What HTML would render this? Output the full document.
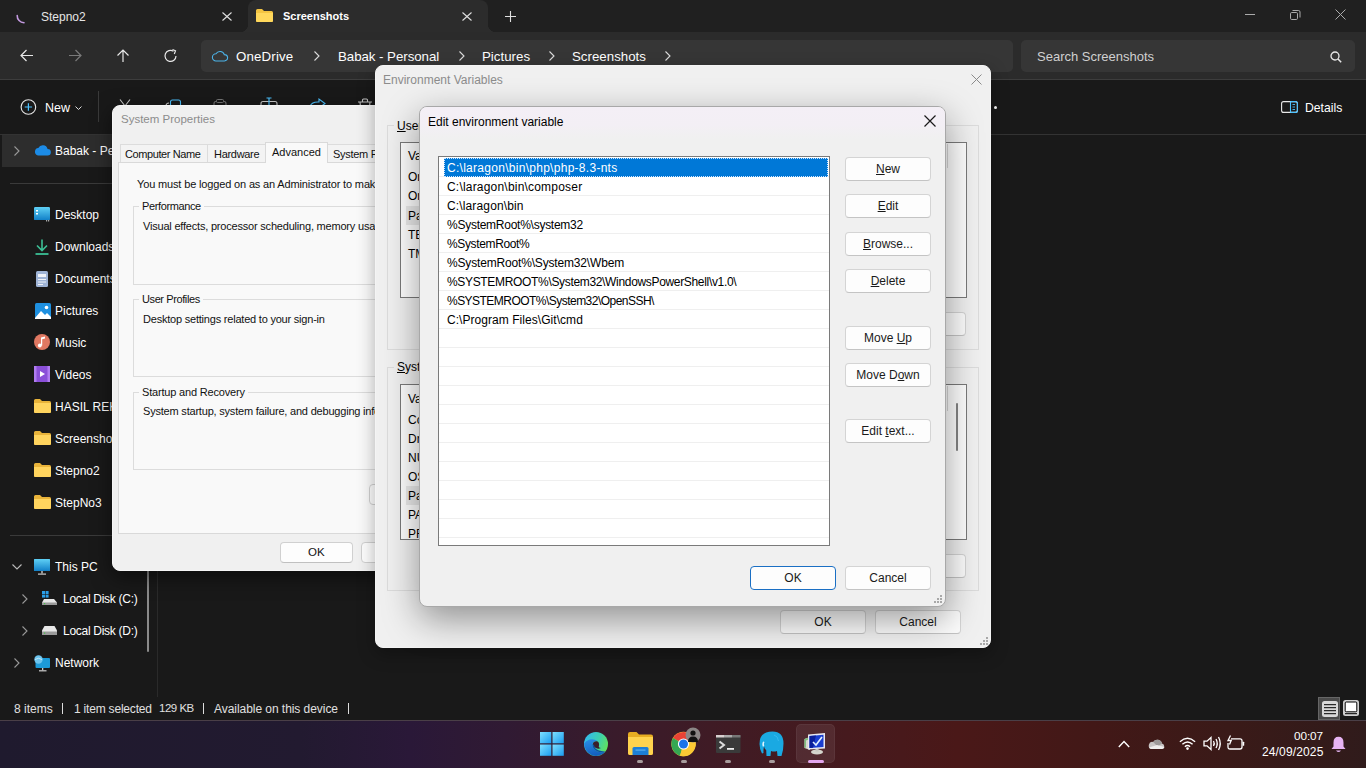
<!DOCTYPE html>
<html><head><meta charset="utf-8">
<style>
*{margin:0;padding:0;box-sizing:border-box}
html,body{width:1366px;height:768px;overflow:hidden;background:#191919;font-family:"Liberation Sans",sans-serif;position:relative}
.a{position:absolute}
.t{position:absolute;white-space:nowrap;line-height:1}
svg{position:absolute;overflow:visible}
.ex{color:#fff;font-size:13.3px}
.nv{color:#fff;font-size:12px}
.d12{font-size:12px;color:#000}
.btn{position:absolute;background:#fdfdfd;border:1px solid #d4d4d4;border-bottom-color:#c4c4c4;border-radius:4px;font-size:12px;color:#1a1a1a;text-align:center;line-height:22px;height:24px;width:86px}
.u{text-decoration:underline;text-underline-offset:1px}
.row{position:absolute;left:0;width:390px;height:19px;border-bottom:1px solid #efefef}
.rt{position:absolute;left:8px;top:4px;font-size:12px;line-height:1;white-space:nowrap;color:#000}
</style></head><body>

<!-- ============ EXPLORER ============ -->
<div class="a" style="left:0;top:0;width:1366px;height:32px;background:#202020"></div>
<div class="a" style="left:248px;top:0;width:240px;height:32px;background:#2c2c2c;border-radius:8px 8px 0 0"></div>
<div class="a" style="left:240px;top:24px;width:8px;height:8px;background:radial-gradient(circle at 0 0,#202020 8px,#2c2c2c 8.5px)"></div>
<div class="a" style="left:488px;top:24px;width:8px;height:8px;background:radial-gradient(circle at 100% 0,#202020 8px,#2c2c2c 8.5px)"></div>
<svg style="left:0;top:0" width="40" height="32"><path d="M17.2 15.5 A7 7 0 0 0 24 22.8" stroke="#c39ae0" stroke-width="1.6" fill="none" stroke-linecap="round"/></svg>
<div class="t" style="left:41px;top:11px;font-size:12px;color:#e6e6e6">Stepno2</div>
<svg style="left:222px;top:12px" width="10" height="9"><path d="M0.5 0.5L9.5 8.5M9.5 0.5L0.5 8.5" stroke="#e0e0e0" stroke-width="1.1"/></svg>
<svg style="left:256px;top:9px" width="17" height="13"><path d="M0 1.5Q0 0 1.5 0H6L8 2H15.5Q17 2 17 3.5V11.5Q17 13 15.5 13H1.5Q0 13 0 11.5Z" fill="#f4c542"/><path d="M0 4H17V11.5Q17 13 15.5 13H1.5Q0 13 0 11.5Z" fill="#ffd85c"/></svg>
<div class="t" style="left:283px;top:11px;font-size:11px;font-weight:bold;color:#fff">Screenshots</div>
<svg style="left:462px;top:12px" width="10" height="9"><path d="M0.5 0.5L9.5 8.5M9.5 0.5L0.5 8.5" stroke="#e0e0e0" stroke-width="1.1"/></svg>
<svg style="left:505px;top:11px" width="11" height="11"><path d="M5.5 0V11M0 5.5H11" stroke="#e0e0e0" stroke-width="1.1"/></svg>
<!-- window controls -->
<svg style="left:1245px;top:14px" width="11" height="2"><path d="M0 0.5H10" stroke="#aaa" stroke-width="1"/></svg>
<svg style="left:1290px;top:10px" width="11" height="10"><rect x="0.5" y="2.5" width="7" height="7" rx="1.2" fill="none" stroke="#aaa"/><path d="M2.5 0.5H8.5Q10 0.5 10 2V7.5" fill="none" stroke="#aaa"/></svg>
<svg style="left:1335px;top:9px" width="11" height="11"><path d="M0.5 0.5L10.5 10.5M10.5 0.5L0.5 10.5" stroke="#aaa" stroke-width="1"/></svg>

<!-- address row -->
<div class="a" style="left:0;top:32px;width:1366px;height:48px;background:#2b2b2b;border-bottom:1px solid #3d3d3d"></div>
<svg style="left:20px;top:49px" width="14" height="13"><path d="M13 6.5H1M6.5 1L1 6.5L6.5 12" stroke="#e8e8e8" stroke-width="1.2" fill="none"/></svg>
<svg style="left:68px;top:49px" width="14" height="13"><path d="M1 6.5H13M7.5 1L13 6.5L7.5 12" stroke="#7a7a7a" stroke-width="1.2" fill="none"/></svg>
<svg style="left:116px;top:49px" width="14" height="14"><path d="M7 13V1M1.5 6.5L7 1L12.5 6.5" stroke="#e8e8e8" stroke-width="1.2" fill="none"/></svg>
<svg style="left:164px;top:49px" width="14" height="14"><path d="M12 7A5.5 5.5 0 1 1 9.5 2.3" stroke="#e8e8e8" stroke-width="1.2" fill="none"/><path d="M8.5 0.5L11.5 1.8L10.3 5" stroke="#e8e8e8" stroke-width="1.2" fill="none"/></svg>
<div class="a" style="left:201px;top:40px;width:812px;height:32px;background:#363636;border-radius:5px"></div>
<svg style="left:212px;top:50px" width="16" height="12"><path d="M4 11H12.5A3.2 3.2 0 0 0 12.3 4.6A4.6 4.6 0 0 0 4 3.8A3.6 3.6 0 0 0 4 11Z" stroke="#4cb3e8" stroke-width="1.1" fill="none"/></svg>
<div class="t ex" style="left:236px;top:50px;letter-spacing:0.15px">OneDrive</div>
<svg style="left:314px;top:51px" width="6" height="10"><path d="M0.5 0.5L5 5L0.5 9.5" stroke="#ddd" stroke-width="1.1" fill="none"/></svg>
<div class="t ex" style="left:338px;top:50px;letter-spacing:-0.05px">Babak - Personal</div>
<svg style="left:459px;top:51px" width="6" height="10"><path d="M0.5 0.5L5 5L0.5 9.5" stroke="#ddd" stroke-width="1.1" fill="none"/></svg>
<div class="t ex" style="left:482px;top:50px;letter-spacing:0px">Pictures</div>
<svg style="left:549px;top:51px" width="6" height="10"><path d="M0.5 0.5L5 5L0.5 9.5" stroke="#ddd" stroke-width="1.1" fill="none"/></svg>
<div class="t ex" style="left:572px;top:50px">Screenshots</div>
<svg style="left:665px;top:51px" width="6" height="10"><path d="M0.5 0.5L5 5L0.5 9.5" stroke="#ddd" stroke-width="1.1" fill="none"/></svg>
<div class="a" style="left:1021px;top:40px;width:334px;height:32px;background:#363636;border-radius:5px"></div>
<div class="t" style="left:1037px;top:50px;font-size:13px;color:#d0d0d0">Search Screenshots</div>
<svg style="left:1330px;top:51px" width="12" height="12"><circle cx="5" cy="5" r="4" stroke="#e8e8e8" stroke-width="1.3" fill="none"/><path d="M8 8L11.2 11.2" stroke="#e8e8e8" stroke-width="1.5"/></svg>

<!-- command bar -->
<div class="a" style="left:0;top:134px;width:1366px;height:1px;background:#333"></div>
<svg style="left:20px;top:99px" width="17" height="17"><circle cx="8.4" cy="8" r="7.3" stroke="#e8e8e8" stroke-width="1.1" fill="none"/><path d="M8.4 4.3V11.7M4.7 8H12.1" stroke="#4cc2ff" stroke-width="1.2"/></svg>
<div class="t" style="left:45px;top:102px;font-size:12.5px;color:#fff">New</div>
<svg style="left:75px;top:106px" width="7" height="4"><path d="M0.5 0.5L3.5 3.5L6.5 0.5" stroke="#ddd" stroke-width="1" fill="none"/></svg>
<div class="a" style="left:98px;top:91px;width:1px;height:31px;background:#3a3a3a"></div>
<svg style="left:119px;top:99px" width="12" height="8"><path d="M1 0.5L6 7M11 0.5L6 7" stroke="#ccc" stroke-width="1.1" fill="none"/></svg>
<svg style="left:165px;top:99px" width="17" height="8"><rect x="5.5" y="1" width="10" height="12" rx="2" stroke="#4cc2ff" stroke-width="1.1" fill="none"/><path d="M1 7Q1 4 4 4" stroke="#ccc" stroke-width="1.1" fill="none"/></svg>
<svg style="left:213px;top:99px" width="14" height="8"><rect x="1" y="2.5" width="12" height="12" rx="2" stroke="#777" stroke-width="1.1" fill="none"/><rect x="3.5" y="0.5" width="7" height="3" rx="1" stroke="#777" stroke-width="1" fill="#191919"/></svg>
<svg style="left:260px;top:97px" width="18" height="10"><rect x="1" y="4.5" width="16" height="10" rx="2" stroke="#ccc" stroke-width="1.1" fill="none"/><path d="M6.5 1H11.5M9 1V10" stroke="#4cc2ff" stroke-width="1.2" fill="none"/></svg>
<svg style="left:309px;top:98px" width="17" height="9"><path d="M1 9Q2 4 9 4H10V1L16 5.5L10 10" stroke="#4cc2ff" stroke-width="1.1" fill="none"/><path d="M1 9V12" stroke="#ccc" stroke-width="1.1"/></svg>
<svg style="left:357px;top:98px" width="16" height="9"><path d="M1 4H15M5.5 4V2Q5.5 1 6.5 1H9.5Q10.5 1 10.5 2V4M3 4L4 14M13 4L12 14" stroke="#ccc" stroke-width="1.1" fill="none"/></svg>
<div class="a" style="left:994px;top:106px;width:3px;height:3px;border-radius:50%;background:#fff"></div>
<svg style="left:1281px;top:101px" width="17" height="12"><rect x="0.6" y="0.6" width="15.8" height="10.8" rx="2" stroke="#e8e8e8" stroke-width="1.1" fill="none"/><path d="M9.5 0.6V11.4" stroke="#4cc2ff" stroke-width="1.1"/><path d="M9.5 0.6H14.4Q16.4 0.6 16.4 2.6V9.4Q16.4 11.4 14.4 11.4H9.5" stroke="#4cc2ff" stroke-width="1.1" fill="none"/><path d="M11.5 3.5H14M11.5 6H14M11.5 8.5H14" stroke="#4cc2ff" stroke-width="0.9"/></svg>
<div class="t" style="left:1305px;top:102px;font-size:12.2px;color:#fff">Details</div>

<!-- nav pane -->
<div class="a" style="left:0;top:135px;width:158px;height:562px;background:#191919"></div>
<div class="a" style="left:2px;top:135px;width:156px;height:32px;background:#2d2d2d"></div>
<svg style="left:14px;top:146px" width="6" height="10"><path d="M0.5 0.5L5 5L0.5 9.5" stroke="#999" stroke-width="1.1" fill="none"/></svg>
<svg style="left:34px;top:144px" width="17" height="12"><path d="M4 11.5H13.5A3.3 3.3 0 0 0 13.6 4.9A5 5 0 0 0 4.3 4A3.8 3.8 0 0 0 4 11.5Z" fill="#1c8be6"/></svg>
<div class="t nv" style="left:55px;top:145px">Babak - Personal</div>
<div class="a" style="left:10px;top:183px;width:148px;height:1px;background:#3a3a3a"></div>

<svg style="left:34px;top:207px" width="17" height="16"><rect x="0" y="0" width="16" height="13" rx="1.5" fill="#36a9e1"/><rect x="0" y="0" width="16" height="13" rx="1.5" fill="url(#gdesk)"/><rect x="2" y="3" width="2" height="1.5" fill="#fff"/><rect x="2" y="6" width="2" height="1.5" fill="#fff"/><rect x="12" y="13" width="1.2" height="1.5" fill="#aaa"/><rect x="14" y="13" width="1.2" height="1.5" fill="#aaa"/>
<defs><linearGradient id="gdesk" x1="0" y1="0" x2="0" y2="1"><stop offset="0" stop-color="#5fd0f5"/><stop offset="1" stop-color="#1180c8"/></linearGradient></defs></svg>
<div class="t nv" style="left:55px;top:209px">Desktop</div>
<svg style="left:35px;top:239px" width="14" height="17"><path d="M7 0.5V11M2 6.5L7 11.5L12 6.5" stroke="#3cbf95" stroke-width="1.6" fill="none"/><path d="M0.5 15H13.5" stroke="#3cbf95" stroke-width="1.8"/></svg>
<div class="t nv" style="left:55px;top:241px">Downloads</div>
<svg style="left:36px;top:271px" width="12" height="16"><rect x="0" y="0" width="12" height="16" rx="1.5" fill="#9fb4d6"/><rect x="2" y="3" width="8" height="3" fill="#eef2f8"/><rect x="2" y="8" width="8" height="1" fill="#eef2f8"/><rect x="2" y="10.5" width="8" height="1" fill="#eef2f8"/><rect x="2" y="13" width="5" height="1" fill="#eef2f8"/></svg>
<div class="t nv" style="left:55px;top:273px">Documents</div>
<svg style="left:35px;top:303px" width="16" height="16"><rect x="0" y="0" width="16" height="16" rx="1.5" fill="#1e90e0"/><path d="M0 15L6 8L10 12L12 10L16 14V16H0Z" fill="#fff"/><circle cx="11.5" cy="4.5" r="1.8" fill="#fff"/></svg>
<div class="t nv" style="left:55px;top:305px">Pictures</div>
<svg style="left:34px;top:334px" width="16" height="16"><circle cx="8" cy="8" r="8" fill="#e07862"/><path d="M7 11.5V3.5L11 2.5V4.5L8.2 5.3V11.5" fill="#fff"/><circle cx="5.8" cy="11.5" r="1.9" fill="#fff"/></svg>
<div class="t nv" style="left:55px;top:337px">Music</div>
<svg style="left:34px;top:366px" width="16" height="16"><rect x="0" y="0" width="16" height="16" rx="1.5" fill="#8a4fd8"/><rect x="0" y="0" width="2.5" height="16" fill="#b07cf0"/><rect x="13.5" y="0" width="2.5" height="16" fill="#b07cf0"/><path d="M6 5L11 8L6 11Z" fill="#fff"/></svg>
<div class="t nv" style="left:55px;top:369px">Videos</div>
<svg style="left:34px;top:399px" width="17" height="14"><path d="M0 1.5Q0 0 1.5 0H6L8 2H15.5Q17 2 17 3.5V12.5Q17 14 15.5 14H1.5Q0 14 0 12.5Z" fill="#e8b33a"/><path d="M0 4H17V12.5Q17 14 15.5 14H1.5Q0 14 0 12.5Z" fill="#ffd45e"/></svg>
<div class="t nv" style="left:55px;top:401px">HASIL REKAP</div>
<svg style="left:34px;top:431px" width="17" height="14"><path d="M0 1.5Q0 0 1.5 0H6L8 2H15.5Q17 2 17 3.5V12.5Q17 14 15.5 14H1.5Q0 14 0 12.5Z" fill="#e8b33a"/><path d="M0 4H17V12.5Q17 14 15.5 14H1.5Q0 14 0 12.5Z" fill="#ffd45e"/></svg>
<div class="t nv" style="left:55px;top:433px">Screenshots</div>
<svg style="left:34px;top:463px" width="17" height="14"><path d="M0 1.5Q0 0 1.5 0H6L8 2H15.5Q17 2 17 3.5V12.5Q17 14 15.5 14H1.5Q0 14 0 12.5Z" fill="#e8b33a"/><path d="M0 4H17V12.5Q17 14 15.5 14H1.5Q0 14 0 12.5Z" fill="#ffd45e"/></svg>
<div class="t nv" style="left:55px;top:465px">Stepno2</div>
<svg style="left:34px;top:495px" width="17" height="14"><path d="M0 1.5Q0 0 1.5 0H6L8 2H15.5Q17 2 17 3.5V12.5Q17 14 15.5 14H1.5Q0 14 0 12.5Z" fill="#e8b33a"/><path d="M0 4H17V12.5Q17 14 15.5 14H1.5Q0 14 0 12.5Z" fill="#ffd45e"/></svg>
<div class="t nv" style="left:55px;top:497px">StepNo3</div>
<div class="a" style="left:10px;top:535px;width:148px;height:1px;background:#3a3a3a"></div>
<svg style="left:12px;top:564px" width="10" height="6"><path d="M0.5 0.5L5 5L9.5 0.5" stroke="#bbb" stroke-width="1.1" fill="none"/></svg>
<svg style="left:34px;top:559px" width="16" height="16"><rect x="0" y="0" width="16" height="12" rx="1" fill="#2aa8e0"/><rect x="0" y="0" width="16" height="12" rx="1" fill="url(#gdesk)"/><rect x="7.3" y="12" width="1.4" height="2.5" fill="#ccc"/><rect x="4" y="14.5" width="8" height="1.2" fill="#ccc"/></svg>
<div class="t nv" style="left:55px;top:561px">This PC</div>
<svg style="left:22px;top:594px" width="6" height="10"><path d="M0.5 0.5L5 5L0.5 9.5" stroke="#999" stroke-width="1.1" fill="none"/></svg>
<svg style="left:42px;top:591px" width="15" height="15"><rect x="0" y="0" width="3" height="3" fill="#2a9ee8"/><rect x="3.6" y="0" width="3" height="3" fill="#2a9ee8"/><rect x="0" y="3.6" width="3" height="3" fill="#2a9ee8"/><rect x="3.6" y="3.6" width="3" height="3" fill="#2a9ee8"/><path d="M2 8H12L15 11.5V14H0V11.5Z" fill="#e8e8e8"/><rect x="0" y="11.5" width="15" height="2.5" fill="#9a9a9a"/><rect x="2" y="12.2" width="1.2" height="1" fill="#3c3"/></svg>
<div class="t nv" style="left:63px;top:593px;letter-spacing:-0.28px">Local Disk (C:)</div>
<svg style="left:22px;top:626px" width="6" height="10"><path d="M0.5 0.5L5 5L0.5 9.5" stroke="#999" stroke-width="1.1" fill="none"/></svg>
<svg style="left:42px;top:626px" width="15" height="10"><path d="M2.5 0H12.5L15 4.5V9H0V4.5Z" fill="#e8e8e8"/><rect x="0" y="5.5" width="15" height="3.5" fill="#9a9a9a"/><rect x="2" y="6.6" width="1.2" height="1" fill="#3c3"/></svg>
<div class="t nv" style="left:63px;top:625px;letter-spacing:-0.28px">Local Disk (D:)</div>
<svg style="left:14px;top:658px" width="6" height="10"><path d="M0.5 0.5L5 5L0.5 9.5" stroke="#999" stroke-width="1.1" fill="none"/></svg>
<svg style="left:34px;top:655px" width="16" height="17"><rect x="1.5" y="3" width="14.5" height="10" rx="1" fill="#1c9ad8"/><circle cx="4.5" cy="4.5" r="4.2" fill="#6cc4ee"/><path d="M1 4.5Q4.5 2 8 4.5" stroke="#fff" stroke-width="0.6" fill="none"/><rect x="8" y="13" width="1.3" height="2.2" fill="#ccc"/><rect x="5" y="15.2" width="7.5" height="1.2" fill="#ccc"/></svg>
<div class="t nv" style="left:55px;top:657px">Network</div>
<div class="a" style="left:147px;top:570px;width:2px;height:82px;background:#8a8a8a;border-radius:1px"></div>
<div class="a" style="left:157px;top:135px;width:1px;height:562px;background:#2a2a2a"></div>

<!-- status bar -->
<div class="t" style="left:14px;top:703px;font-size:12px;color:#e0e0e0">8 items</div>
<div class="a" style="left:62px;top:703px;width:1px;height:11px;background:#ddd"></div>
<div class="t" style="left:74px;top:703px;font-size:12px;color:#e0e0e0;letter-spacing:-0.2px">1 item selected</div>
<div class="t" style="left:159px;top:703px;font-size:11.5px;color:#e0e0e0;letter-spacing:-0.5px">129 KB</div>
<div class="a" style="left:203px;top:703px;width:1px;height:11px;background:#ddd"></div>
<div class="t" style="left:214px;top:703px;font-size:12px;color:#e0e0e0;letter-spacing:-0.05px">Available on this device</div>
<div class="a" style="left:348px;top:703px;width:1px;height:11px;background:#ddd"></div>
<div class="a" style="left:1318px;top:697px;width:22px;height:23px;background:#4a4a4a;border:1px solid #666"></div>
<svg style="left:1322px;top:701px" width="16" height="16"><rect x="0" y="0" width="16" height="16" rx="2.5" fill="#d8d8d8"/><path d="M2 3.7H14M2 6.7H14M2 9.7H14M2 12.7H14" stroke="#000" stroke-width="1"/></svg>
<svg style="left:1343px;top:700px" width="16" height="16"><rect x="0" y="0" width="16" height="16" rx="2.5" fill="#d0d0d0"/><rect x="2.2" y="2" width="11.6" height="9.8" rx="1" fill="#fff" stroke="#000" stroke-width="1"/><path d="M2 13.7H14" stroke="#000" stroke-width="1"/></svg>

<!-- ============ TASKBAR ============ -->
<div id="taskbar" class="a" style="left:0;top:720px;width:1366px;height:48px;background:linear-gradient(90deg,#1f1a2e 0%,#221a30 22%,#2a1838 30%,#301a33 37%,#391b2b 45%,#3f1b25 52%,#461a1e 62%,#4a1818 70%,#421817 80%,#3a1a18 90%,#301b1b 100%)"></div>
<div class="a" style="left:0;top:720px;width:1366px;height:1px;background:#4a3f47"></div>

<svg style="left:540px;top:732px" width="24" height="24"><defs><linearGradient id="gw" x1="0" y1="0" x2="1" y2="1"><stop offset="0" stop-color="#7ee0ff"/><stop offset="1" stop-color="#1a9cf0"/></linearGradient></defs><rect x="0" y="0" width="11.3" height="11.3" fill="url(#gw)"/><rect x="12.5" y="0" width="11.3" height="11.3" fill="url(#gw)"/><rect x="0" y="12.5" width="11.3" height="11.3" fill="url(#gw)"/><rect x="12.5" y="12.5" width="11.3" height="11.3" fill="url(#gw)"/></svg>
<svg style="left:584px;top:732px" width="24" height="24"><defs><linearGradient id="ge1" x1="0" y1="0.2" x2="1" y2="0.6"><stop offset="0" stop-color="#33b8f2"/><stop offset="0.55" stop-color="#3ccfb0"/><stop offset="1" stop-color="#62e35c"/></linearGradient><linearGradient id="ge2" x1="0" y1="0" x2="0.3" y2="1"><stop offset="0" stop-color="#2a90e8"/><stop offset="1" stop-color="#1460c0"/></linearGradient></defs><circle cx="12" cy="12" r="12" fill="url(#ge1)"/><path d="M0.2 11.5A12 12 0 0 0 21.5 19.5Q17 21 13.5 19.5Q8 17 8.5 12Q9.5 8.5 13.5 9Q10 6.5 5.5 7.5Q1.5 8.8 0.2 11.5Z" fill="url(#ge2)"/><path d="M8.8 12Q9.5 8.8 13 9.2Q15.5 10 15 13.5Q14 15.5 17 16Q13.5 17.5 11 15.5Q8.5 14 8.8 12Z" fill="#3a1e2a"/><path d="M21.5 19.5Q17 21 13.5 19.5Q8 17 8.5 12L10 13Q10.5 17 15 18.5Q19 19.5 21.5 19.5Z" fill="#0e4ea0"/></svg>
<svg style="left:628px;top:732px" width="25" height="23"><path d="M0 2Q0 0 2 0H8.5L11 2.5H23Q25 2.5 25 4.5V21Q25 23 23 23H2Q0 23 0 21Z" fill="#e8ad22"/><path d="M0 5H25V21Q25 23 23 23H2Q0 23 0 21Z" fill="#ffd34e"/><path d="M4.5 16.5Q4.5 15 6 15H19Q20.5 15 20.5 16.5V23H4.5Z" fill="#1d7fd6"/><rect x="7.5" y="17.5" width="10" height="1.2" fill="#5ab0f0"/></svg>
<div class="a" style="left:637px;top:760px;width:6px;height:3px;border-radius:2px;background:#a89d9d"></div>
<svg style="left:671px;top:731px" width="26" height="26"><circle cx="12.5" cy="13" r="12.2" fill="#fdd23a"/><path d="M12.5 13L2 7A12.2 12.2 0 0 1 23 7Z" fill="#e94235"/><path d="M12.5 13L2 7A12.2 12.2 0 0 0 9 24.7Z" fill="#34a853"/><path d="M12.5 13L23 7A12.2 12.2 0 0 1 9 24.7Z" fill="#fcc934"/><circle cx="12.5" cy="13" r="5.6" fill="#fff"/><circle cx="12.5" cy="13" r="4.5" fill="#1a73e8"/></svg>
<svg style="left:685px;top:727px" width="16" height="16"><circle cx="8" cy="8" r="7.5" fill="#8b8686"/><circle cx="8" cy="6" r="2.6" fill="#111"/><path d="M3 15Q3 9.5 8 9.5Q13 9.5 13 15Z" fill="#111"/></svg>
<div class="a" style="left:681px;top:760px;width:6px;height:3px;border-radius:2px;background:#a89d9d"></div>
<svg style="left:716px;top:735px" width="25" height="18"><rect x="0" y="0" width="24.5" height="18" rx="1" fill="#3a3a3a"/><rect x="0" y="0" width="8" height="2.5" fill="#d8d0d0"/><rect x="8" y="0" width="8" height="2.5" fill="#aaa"/><rect x="16" y="0" width="8.5" height="2.5" fill="#777"/><path d="M3.5 6.5L8 10L3.5 13.5" stroke="#ddd" stroke-width="2" fill="none"/><rect x="11" y="13" width="7" height="1.8" fill="#eee"/></svg>
<div class="a" style="left:725px;top:760px;width:6px;height:3px;border-radius:2px;background:#a89d9d"></div>
<svg style="left:759px;top:731px" width="26" height="26"><path d="M13.5 0.5Q24.5 0.5 24.5 12.5Q24.5 19 22.5 25H18.5L18 20Q15 21 12 20L11.5 25H7.5L7.2 19Q5.5 18 5 15.5Q4.2 19 4.5 22L3 22.5Q0.5 18 0.5 13Q0.5 0.5 13.5 0.5Z" fill="#1aa9e2"/><path d="M4.2 10.5Q2.5 13 4 16L5.3 14.5Q4.5 12.8 5.5 11Z" fill="#e0f4ff"/><path d="M15 4Q19 5 19.5 10" stroke="#36b8ee" stroke-width="1" fill="none"/></svg>
<div class="a" style="left:769px;top:760px;width:6px;height:3px;border-radius:2px;background:#a89d9d"></div>
<div class="a" style="left:796px;top:724px;width:39px;height:39px;border-radius:5px;background:rgba(255,255,255,.08);border:1px solid rgba(255,255,255,.05)"></div>
<svg style="left:804px;top:733px" width="24" height="22"><path d="M0.5 6L6 4V17L0.5 15Z" fill="#d8d8d0"/><path d="M0.5 6L6 4V6L2 7.5V14.5L0.5 15Z" fill="#7fbf7f"/><path d="M4 1.5L21 0V15.5L4 16.5Z" fill="#e8e8f0"/><path d="M5.5 3L19.5 1.8V14L5.5 15Z" fill="#1a3ed0"/><path d="M5.5 3L12 2.5L9 14.8L5.5 15Z" fill="#0a1f9a"/><path d="M9 9L12 12L18 4" stroke="#e0f0ff" stroke-width="1.6" fill="none"/><ellipse cx="13" cy="19" rx="6" ry="2.6" fill="#d5d5cd"/><rect x="11.5" y="16" width="3" height="2.5" fill="#c8c8c0"/></svg>
<div class="a" style="left:808px;top:760px;width:16px;height:3px;border-radius:2px;background:#e3a6ee"></div>
<!-- tray -->
<svg style="left:1118px;top:740px" width="12" height="8"><path d="M0.8 7L6 1.5L11.2 7" stroke="#fff" stroke-width="1.4" fill="none"/></svg>
<svg style="left:1148px;top:738px" width="17" height="12"><path d="M3.5 11H14A2.8 2.8 0 0 0 14 5.5A4.8 4.8 0 0 0 5.2 4A3.6 3.6 0 0 0 3.5 11Z" fill="#c8c4c4"/><path d="M5.2 4A4.8 4.8 0 0 1 14 5.5L9.5 8.5Z" fill="#9c9898"/><path d="M1 9.5Q2 11 3.5 11H14Q16 11 16.5 9L9 7Z" fill="#f0eeee"/></svg>
<svg style="left:1179px;top:737px" width="17" height="13"><path d="M0.9 4.7Q8.5 -2.2 16.1 4.7" stroke="#fff" stroke-width="1.4" fill="none"/><path d="M3.4 7.2Q8.5 2.6 13.6 7.2" stroke="#fff" stroke-width="1.4" fill="none"/><path d="M5.9 9.7Q8.5 7.4 11.1 9.7" stroke="#fff" stroke-width="1.4" fill="none"/><circle cx="8.5" cy="11.6" r="1.3" fill="#fff"/></svg>
<svg style="left:1203px;top:736px" width="18" height="15"><path d="M1 5.2H4L8 1.5V13.5L4 9.8H1Z" stroke="#fff" stroke-width="1.3" fill="none"/><path d="M10.5 5Q12 7.5 10.5 10" stroke="#fff" stroke-width="1.3" fill="none"/><path d="M13 3Q15.5 7.5 13 12" stroke="#fff" stroke-width="1.3" fill="none"/><path d="M15.5 1Q19 7.5 15.5 14" stroke="#fff" stroke-width="1.3" fill="none"/></svg>
<svg style="left:1227px;top:735px" width="18" height="15"><path d="M4 3.8H13Q15 3.8 15 5.8V12Q15 14 13 14H3Q1 14 1 12V8" stroke="#fff" stroke-width="1.3" fill="none"/><rect x="15.6" y="6.8" width="1.6" height="4" rx="0.5" fill="#fff"/><path d="M3.5 0.5L1 5.5H4.2L2.5 9.5" stroke="#fff" stroke-width="1.3" fill="none"/></svg>
<div class="t" style="left:1223px;top:731px;width:100px;text-align:right;font-size:11.8px;color:#fff;letter-spacing:-0.1px">00:07</div>
<div class="t" style="left:1223px;top:746px;width:100.5px;text-align:right;font-size:12px;color:#fff;letter-spacing:0.15px">24/09/2025</div>
<svg style="left:1331px;top:736px" width="15" height="17"><path d="M7.5 0.8Q12.5 0.8 12.5 6.5V10.5L14.5 13H0.5L2.5 10.5V6.5Q2.5 0.8 7.5 0.8Z" fill="#e6b3f2"/><path d="M5 14.5Q7.5 17.5 10 14.5Z" fill="#e6b3f2"/></svg>

<!-- ============ SYSTEM PROPERTIES ============ -->
<div class="a" style="left:112px;top:105px;width:320px;height:466px;background:#f0f0f0;border:1px solid #f6f6f6;border-radius:8px;box-shadow:0 6px 20px rgba(0,0,0,.5)"></div>
<div class="t" style="left:121px;top:114px;font-size:11.5px;color:#8c8c8c">System Properties</div>
<!-- tabs -->
<div class="a" style="left:120px;top:144px;width:88px;height:19px;background:#f3f3f3;border:1px solid #dcdcdc;border-bottom:none"></div>
<div class="a" style="left:207px;top:144px;width:59px;height:19px;background:#f3f3f3;border:1px solid #dcdcdc;border-bottom:none"></div>
<div class="a" style="left:327px;top:144px;width:60px;height:19px;background:#f3f3f3;border:1px solid #dcdcdc;border-bottom:none"></div>
<div class="a" style="left:118px;top:162px;width:300px;height:372px;background:#f9f9f9;border:1px solid #d9d9d9"></div>
<div class="a" style="left:265px;top:142px;width:63px;height:21px;background:#f9f9f9;border:1px solid #d9d9d9;border-bottom:none"></div>
<div class="t" style="left:125px;top:149px;font-size:11px;letter-spacing:-0.4px;color:#111">Computer Name</div>
<div class="t" style="left:214px;top:149px;font-size:11px;letter-spacing:-0.3px;color:#111">Hardware</div>
<div class="t" style="left:272px;top:147px;font-size:11px;color:#111">Advanced</div>
<div class="t" style="left:333px;top:149px;font-size:11px;letter-spacing:-0.3px;color:#111">System Protection</div>
<div class="t" style="left:137px;top:179px;font-size:11px;letter-spacing:-0.15px;color:#111">You must be logged on as an Administrator to make most of these changes.</div>
<!-- groups -->
<div class="a" style="left:133px;top:206px;width:280px;height:79px;border:1px solid #dcdcdc"></div>
<div class="t" style="left:139px;top:201px;font-size:11px;letter-spacing:-0.38px;color:#111;background:#f9f9f9;padding:0 3px">Performance</div>
<div class="t" style="left:143px;top:221px;font-size:11px;letter-spacing:-0.2px;color:#111">Visual effects, processor scheduling, memory usage, and virtual memory</div>
<div class="a" style="left:133px;top:299px;width:280px;height:78px;border:1px solid #dcdcdc"></div>
<div class="t" style="left:139px;top:294px;font-size:11px;letter-spacing:-0.4px;color:#111;background:#f9f9f9;padding:0 3px">User Profiles</div>
<div class="t" style="left:143px;top:314px;font-size:11px;letter-spacing:-0.21px;color:#111">Desktop settings related to your sign-in</div>
<div class="a" style="left:133px;top:392px;width:280px;height:78px;border:1px solid #dcdcdc"></div>
<div class="t" style="left:139px;top:387px;font-size:11px;letter-spacing:-0.18px;color:#111;background:#f9f9f9;padding:0 3px">Startup and Recovery</div>
<div class="t" style="left:143px;top:406px;font-size:11px;letter-spacing:-0.2px;color:#111">System startup, system failure, and debugging information</div>
<div class="a" style="left:369px;top:484px;width:60px;height:21px;background:#fdfdfd;border:1px solid #d0d0d0;border-radius:4px"></div>
<div class="a" style="left:280px;top:542px;width:73px;height:21px;background:#fdfdfd;border:1px solid #d0d0d0;border-bottom-color:#c0c0c0;border-radius:4px"></div>
<div class="t" style="left:308px;top:547px;font-size:11.5px;color:#111">OK</div>
<div class="a" style="left:361px;top:542px;width:73px;height:21px;background:#fdfdfd;border:1px solid #d0d0d0;border-radius:4px"></div>

<!-- ============ ENVIRONMENT VARIABLES ============ -->
<div class="a" style="left:375px;top:65px;width:616px;height:583px;background:#f0f0f0;border:1px solid #f4f4f4;border-radius:8px;box-shadow:0 6px 18px rgba(0,0,0,.3);overflow:hidden">
</div>
<div class="t" style="left:383px;top:74px;font-size:12px;color:#8c8c8c">Environment Variables</div>
<svg style="left:971px;top:74px" width="11" height="11"><path d="M0.5 0.5L10.5 10.5M10.5 0.5L0.5 10.5" stroke="#8a8a8a" stroke-width="1"/></svg>
<!-- user group -->
<div class="a" style="left:387px;top:125px;width:592px;height:225px;border:1px solid #dcdcdc"></div>
<div class="t" style="left:394px;top:120px;font-size:12px;color:#000;background:#f0f0f0;padding:0 3px"><span class="u">U</span>ser variables for Babak</div>
<div class="a" style="left:400px;top:142px;width:567px;height:156px;background:#fff;border:1px solid #7a7a7a"></div>
<div class="t" style="left:408px;top:150px;font-size:12px;color:#000">Variable</div>
<div class="a" style="left:947px;top:144px;width:1px;height:24px;background:#d8d8d8"></div>
<div class="t" style="left:408px;top:171px;font-size:12px;color:#000">OneDrive</div>
<div class="t" style="left:408px;top:190px;font-size:12px;color:#000">OneDriveConsumer</div>
<div class="a" style="left:406px;top:206px;width:200px;height:19px;background:#ebebeb"></div>
<div class="t" style="left:408px;top:210px;font-size:12px;color:#000">Path</div>
<div class="t" style="left:408px;top:229px;font-size:12px;color:#000">TEMP</div>
<div class="t" style="left:408px;top:248px;font-size:12px;color:#000">TMP</div>
<div class="btn" style="left:880px;top:312px;width:86px;height:24px"></div>
<!-- system group -->
<div class="a" style="left:387px;top:367px;width:592px;height:224px;border:1px solid #dcdcdc"></div>
<div class="t" style="left:394px;top:361px;font-size:12px;color:#000;background:#f0f0f0;padding:0 3px"><span class="u">S</span>ystem variables</div>
<div class="a" style="left:400px;top:384px;width:567px;height:156px;background:#fff;border:1px solid #7a7a7a;overflow:hidden">
 <div class="t" style="left:7px;top:8px;font-size:12px;color:#000">Variable</div>
 <div class="a" style="left:546px;top:1px;width:1px;height:25px;background:#d8d8d8"></div>
 <div class="t" style="left:7px;top:29px;font-size:12px;color:#000">ComSpec</div>
 <div class="t" style="left:7px;top:48px;font-size:12px;color:#000">DriverData</div>
 <div class="t" style="left:7px;top:67px;font-size:12px;color:#000">NUMBER_OF_PROCESSORS</div>
 <div class="t" style="left:7px;top:86px;font-size:12px;color:#000">OS</div>
 <div class="a" style="left:5px;top:101px;width:200px;height:19px;background:#ebebeb"></div>
 <div class="t" style="left:7px;top:105px;font-size:12px;color:#000">Path</div>
 <div class="t" style="left:7px;top:124px;font-size:12px;color:#000">PATHEXT</div>
 <div class="t" style="left:7px;top:143px;font-size:12px;color:#000">PROCESSOR_ARCHITECTURE</div>
 <div class="a" style="left:555px;top:18px;width:2px;height:48px;background:#858585;border-radius:1px"></div>
</div>
<div class="btn" style="left:880px;top:554px;width:86px;height:24px"></div>
<div class="btn" style="left:780px;top:610px;width:86px;height:24px">OK</div>
<div class="btn" style="left:875px;top:610px;width:86px;height:24px">Cancel</div>
<svg style="left:979px;top:636px" width="10" height="10"><g fill="#a8a8a8"><rect x="7" y="1" width="2" height="2"/><rect x="4" y="4" width="2" height="2"/><rect x="7" y="4" width="2" height="2"/><rect x="1" y="7" width="2" height="2"/><rect x="4" y="7" width="2" height="2"/><rect x="7" y="7" width="2" height="2"/></g></svg>

<!-- ============ EDIT ENV VAR ============ -->
<div class="a" style="left:419px;top:106px;width:527px;height:501px;background:#f0f0f0;border:1px solid #a8a8a8;border-radius:8px;box-shadow:0 12px 36px rgba(0,0,0,.4);overflow:hidden">
  <div class="a" style="left:0;top:0;width:526px;height:34px;background:linear-gradient(180deg,#f4eff6 0,#f3eff5 18px,#f0f0f0 32px)"></div>
</div>
<div class="t" style="left:428px;top:116px;font-size:12px;color:#000">Edit environment variable</div>
<svg style="left:924px;top:115px" width="12" height="12"><path d="M0.5 0.5L11.5 11.5M11.5 0.5L0.5 11.5" stroke="#1a1a1a" stroke-width="1.2"/></svg>
<div class="a" style="left:438px;top:156px;width:392px;height:390px;background:#fff;border:1px solid #7a7a7a;overflow:hidden">
  <div class="row" style="top:1px"></div>
  <div class="a" style="left:5px;top:1px;width:384px;height:19px;background:#0078d7;outline:1px dotted #cfe6ff;outline-offset:-1px"></div>
  <div class="rt" style="top:5px;color:#fff;letter-spacing:0.28px">C:\laragon\bin\php\php-8.3-nts</div>
  <div class="row" style="top:20px"></div><div class="rt" style="top:24px;letter-spacing:0.2px">C:\laragon\bin\composer</div>
  <div class="row" style="top:39px"></div><div class="rt" style="top:43px;letter-spacing:0.14px">C:\laragon\bin</div>
  <div class="row" style="top:58px"></div><div class="rt" style="top:62px;letter-spacing:-0.26px">%SystemRoot%\system32</div>
  <div class="row" style="top:77px"></div><div class="rt" style="top:81px;letter-spacing:-0.36px">%SystemRoot%</div>
  <div class="row" style="top:96px"></div><div class="rt" style="top:100px;letter-spacing:-0.17px">%SystemRoot%\System32\Wbem</div>
  <div class="row" style="top:115px"></div><div class="rt" style="top:119px;letter-spacing:-0.33px">%SYSTEMROOT%\System32\WindowsPowerShell\v1.0\</div>
  <div class="row" style="top:134px"></div><div class="rt" style="top:138px;letter-spacing:-0.53px">%SYSTEMROOT%\System32\OpenSSH\</div>
  <div class="row" style="top:153px"></div><div class="rt" style="top:157px;letter-spacing:0.05px">C:\Program Files\Git\cmd</div>
  <div class="row" style="top:172px"></div>
  <div class="row" style="top:191px"></div>
  <div class="row" style="top:210px"></div>
  <div class="row" style="top:229px"></div>
  <div class="row" style="top:248px"></div>
  <div class="row" style="top:267px"></div>
  <div class="row" style="top:286px"></div>
  <div class="row" style="top:305px"></div>
  <div class="row" style="top:324px"></div>
  <div class="row" style="top:343px"></div>
  <div class="row" style="top:362px"></div>
</div>
<div class="btn" style="left:845px;top:157px"><span class="u">N</span>ew</div>
<div class="btn" style="left:845px;top:194px"><span class="u">E</span>dit</div>
<div class="btn" style="left:845px;top:232px"><span class="u">B</span>rowse...</div>
<div class="btn" style="left:845px;top:269px"><span class="u">D</span>elete</div>
<div class="btn" style="left:845px;top:326px">Move <span class="u">U</span>p</div>
<div class="btn" style="left:845px;top:363px">Move D<span class="u">o</span>wn</div>
<div class="btn" style="left:845px;top:419px">Edit <span class="u">t</span>ext...</div>
<div class="btn" style="left:750px;top:566px;border:1px solid #1a6fc4">OK</div>
<div class="btn" style="left:845px;top:566px">Cancel</div>
<svg style="left:933px;top:594px" width="10" height="10"><g fill="#a8a8a8"><rect x="7" y="1" width="2" height="2"/><rect x="4" y="4" width="2" height="2"/><rect x="7" y="4" width="2" height="2"/><rect x="1" y="7" width="2" height="2"/><rect x="4" y="7" width="2" height="2"/><rect x="7" y="7" width="2" height="2"/></g></svg>

</body></html>
